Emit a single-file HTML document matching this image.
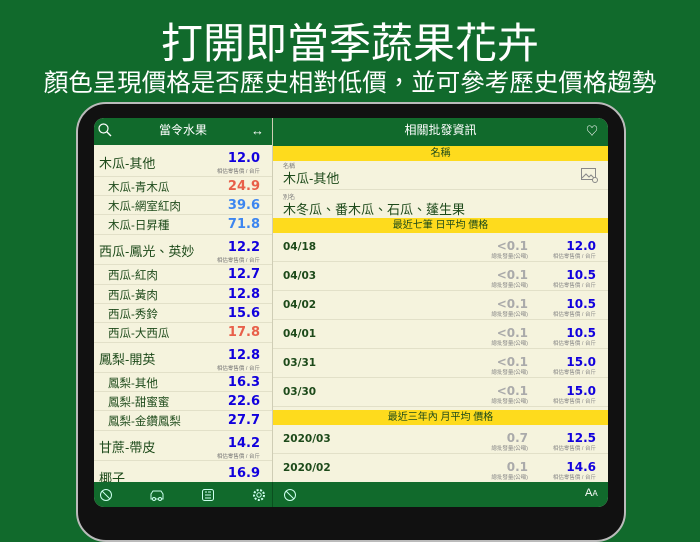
<!DOCTYPE html><html><head><meta charset="utf-8"><style>
*{margin:0;padding:0;box-sizing:border-box}
body{width:700px;height:525px;overflow:hidden;background:#116a2c;font-family:"Liberation Sans","Noto Sans CJK TC",sans-serif;position:relative}
.a{position:absolute}
.t1{left:0;width:700px;top:20px;text-align:center;color:#fff;font-size:42px;line-height:48px;font-weight:normal}
.t2{left:0;width:700px;top:69px;text-align:center;color:#fff;font-size:24.5px;line-height:30px}
.pad{left:76px;top:102px;width:550px;height:440px;background:#111;border-radius:30px;border:2px solid #bbb}
.scr{left:94px;top:118px;width:514px;height:389px;background:#f5f3dd;border-radius:10px;overflow:hidden}
.hd{background:#116a2c;color:#fff;font-size:12px;text-align:center}
.row{position:absolute;left:0;width:178px;border-bottom:1px solid #e2e0c8;color:#1d4a1a}
.n{position:absolute;left:5px;font-size:13px}
.s .n{left:14px;font-size:11.5px}
.v{position:absolute;right:12px;font-weight:bold;font-size:13px;font-family:"DejaVu Sans",sans-serif}
.u{position:absolute;right:12px;font-size:5.5px;color:#777}
.y{position:absolute;left:179px;width:335px;background:#fedb1d;color:#1d4a1a;font-size:10px;text-align:center;line-height:15px}
.r{position:absolute;left:179px;width:335px;height:29px;border-bottom:1px solid #e2e0c8}
.d{position:absolute;left:10px;top:8px;font-weight:bold;font-size:10.5px;color:#1d4a1a;font-family:"DejaVu Sans",sans-serif}
.g{position:absolute;left:190px;width:65px;text-align:right;top:6px;font-size:12px;font-weight:bold;color:#aaa;font-family:"DejaVu Sans",sans-serif}
.gl{position:absolute;left:175px;width:80px;text-align:right;top:19px;font-size:5.5px;color:#888}
.p{position:absolute;right:12px;top:6px;font-size:12px;font-weight:bold;color:#10d;font-family:"DejaVu Sans",sans-serif}
.pl{position:absolute;right:12px;top:19px;font-size:5.5px;color:#888}
svg{position:absolute}
</style></head><body>
<div class="a t1">打開即當季蔬果花卉</div>
<div class="a t2">顏色呈現價格是否歷史相對低價，並可參考歷史價格趨勢</div>
<div class="a pad"></div>
<div class="a scr">
<div class="a hd" style="left:0;top:0;width:178px;height:27px;line-height:25px">當令水果</div>
<svg style="left:4px;top:5px" width="14" height="14" viewBox="0 0 14 14"><circle cx="5.5" cy="5.5" r="4.5" fill="none" stroke="#fff" stroke-width="1.2"/><path d="M9 9l4 4" stroke="#fff" stroke-width="1.3"/></svg>
<div class="a" style="left:157px;top:5px;color:#fff;font-size:13px">↔</div>
<div class="a hd" style="left:179px;top:0;width:335px;height:28px;line-height:25px">相關批發資訊</div>
<div class="a" style="left:492px;top:4px;color:#fff;font-size:12px">♡</div>
<div class="a" style="left:178px;top:0;width:1px;height:389px;background:#cfcdb5"></div>

<div class="row" style="top:28px;height:31px"><span class="n" style="top:7px">木瓜-其他</span><span class="v" style="top:5px;color:#10d">12.0</span><span class="u" style="top:21px">相估零售價 / 台斤</span></div>
<div class="row s" style="top:59px;height:19px"><span class="n" style="top:2px">木瓜-青木瓜</span><span class="v" style="top:2px;color:#e8604a">24.9</span></div>
<div class="row s" style="top:78px;height:19px"><span class="n" style="top:2px">木瓜-網室紅肉</span><span class="v" style="top:2px;color:#3d86f0">39.6</span></div>
<div class="row s" style="top:97px;height:20px"><span class="n" style="top:2px">木瓜-日昇種</span><span class="v" style="top:2px;color:#3d86f0">71.8</span></div>
<div class="row" style="top:117px;height:30px"><span class="n" style="top:6px">西瓜-鳳光、英妙</span><span class="v" style="top:5px;color:#10d">12.2</span><span class="u" style="top:21px">相估零售價 / 台斤</span></div>
<div class="row s" style="top:147px;height:20px"><span class="n" style="top:2px">西瓜-紅肉</span><span class="v" style="top:2px;color:#10d">12.7</span></div>
<div class="row s" style="top:167px;height:19px"><span class="n" style="top:2px">西瓜-黃肉</span><span class="v" style="top:2px;color:#10d">12.8</span></div>
<div class="row s" style="top:186px;height:19px"><span class="n" style="top:2px">西瓜-秀鈴</span><span class="v" style="top:2px;color:#10d">15.6</span></div>
<div class="row s" style="top:205px;height:20px"><span class="n" style="top:2px">西瓜-大西瓜</span><span class="v" style="top:2px;color:#e8604a">17.8</span></div>
<div class="row" style="top:225px;height:30px"><span class="n" style="top:6px">鳳梨-開英</span><span class="v" style="top:5px;color:#10d">12.8</span><span class="u" style="top:21px">相估零售價 / 台斤</span></div>
<div class="row s" style="top:255px;height:19px"><span class="n" style="top:2px">鳳梨-其他</span><span class="v" style="top:2px;color:#10d">16.3</span></div>
<div class="row s" style="top:274px;height:19px"><span class="n" style="top:2px">鳳梨-甜蜜蜜</span><span class="v" style="top:2px;color:#10d">22.6</span></div>
<div class="row s" style="top:293px;height:20px"><span class="n" style="top:2px">鳳梨-金鑽鳳梨</span><span class="v" style="top:2px;color:#10d">27.7</span></div>
<div class="row" style="top:313px;height:30px"><span class="n" style="top:6px">甘蔗-帶皮</span><span class="v" style="top:5px;color:#10d">14.2</span><span class="u" style="top:21px">相估零售價 / 台斤</span></div>
<div class="row" style="top:343px;height:30px;border:0"><span class="n" style="top:7px">椰子</span><span class="v" style="top:5px;color:#10d">16.9</span></div>

<div class="y" style="top:28px">名稱</div>
<div class="a" style="left:189px;top:43px;font-size:6px;color:#777">名稱</div>
<div class="a" style="left:189px;top:50px;font-size:13px;color:#1d4a1a">木瓜-其他</div>
<svg style="left:487px;top:50px" width="18" height="16" viewBox="0 0 18 16"><rect x="0.5" y="0.5" width="14" height="11" fill="none" stroke="#888"/><path d="M1 10l4-4 3 3 2-2 4 4" fill="none" stroke="#888"/><circle cx="14" cy="12" r="2.5" fill="#f5f3dd" stroke="#888"/></svg>
<div class="a" style="left:185px;top:71px;width:329px;height:1px;background:#e2e0c8"></div>
<div class="a" style="left:189px;top:74px;font-size:6px;color:#777">別名</div>
<div class="a" style="left:189px;top:81px;font-size:13px;color:#1d4a1a">木冬瓜、番木瓜、石瓜、蓬生果</div>
<div class="y" style="top:100px">最近七筆 日平均 價格</div>

<div class="r" style="top:115px"><span class="d">04/18</span><span class="g">&lt;0.1</span><span class="gl">總批發量(公噸)</span><span class="p">12.0</span><span class="pl">相估零售價 / 台斤</span></div>
<div class="r" style="top:144px"><span class="d">04/03</span><span class="g">&lt;0.1</span><span class="gl">總批發量(公噸)</span><span class="p">10.5</span><span class="pl">相估零售價 / 台斤</span></div>
<div class="r" style="top:173px"><span class="d">04/02</span><span class="g">&lt;0.1</span><span class="gl">總批發量(公噸)</span><span class="p">10.5</span><span class="pl">相估零售價 / 台斤</span></div>
<div class="r" style="top:202px"><span class="d">04/01</span><span class="g">&lt;0.1</span><span class="gl">總批發量(公噸)</span><span class="p">10.5</span><span class="pl">相估零售價 / 台斤</span></div>
<div class="r" style="top:231px"><span class="d">03/31</span><span class="g">&lt;0.1</span><span class="gl">總批發量(公噸)</span><span class="p">15.0</span><span class="pl">相估零售價 / 台斤</span></div>
<div class="r" style="top:260px"><span class="d">03/30</span><span class="g">&lt;0.1</span><span class="gl">總批發量(公噸)</span><span class="p">15.0</span><span class="pl">相估零售價 / 台斤</span></div>
<div class="y" style="top:292px">最近三年內 月平均 價格</div>
<div class="r" style="top:307px"><span class="d">2020/03</span><span class="g">0.7</span><span class="gl">總批發量(公噸)</span><span class="p">12.5</span><span class="pl">相估零售價 / 台斤</span></div>
<div class="r" style="top:336px;border:0"><span class="d">2020/02</span><span class="g">0.1</span><span class="gl">總批發量(公噸)</span><span class="p">14.6</span><span class="pl">相估零售價 / 台斤</span></div>

<div class="a" style="left:0;top:364px;width:514px;height:25px;background:#116a2c"></div>
<div class="a" style="left:178px;top:364px;width:1px;height:25px;background:#0a4f1f"></div>
<svg style="left:5px;top:370px" width="14" height="14" viewBox="0 0 14 14"><circle cx="7" cy="7" r="5.5" fill="none" stroke="#cfe" stroke-width="1"/><path d="M3 3l8 8" stroke="#cfe"/></svg>
<svg style="left:56px;top:370px" width="14" height="14" viewBox="0 0 14 14"><path d="M1 11V6l2-3h8l2 3v5z" fill="none" stroke="#cfe"/><circle cx="4" cy="11" r="1.5" fill="#116a2c" stroke="#cfe"/><circle cx="10" cy="11" r="1.5" fill="#116a2c" stroke="#cfe"/></svg>
<svg style="left:107px;top:370px" width="14" height="14" viewBox="0 0 14 14"><rect x="1.5" y="1.5" width="11" height="11" rx="2" fill="none" stroke="#cfe"/><path d="M4 4h2M4 7h6M4 10h6M7 4h3" stroke="#cfe"/></svg>
<svg style="left:158px;top:370px" width="14" height="14" viewBox="0 0 14 14"><circle cx="7" cy="7" r="2.2" fill="none" stroke="#cfe"/><circle cx="7" cy="7" r="5" fill="none" stroke="#cfe" stroke-dasharray="2 1.5" stroke-width="2"/></svg>
<svg style="left:189px;top:370px" width="14" height="14" viewBox="0 0 14 14"><circle cx="7" cy="7" r="5.5" fill="none" stroke="#cfe" stroke-width="1"/><path d="M3 3l8 8" stroke="#cfe"/></svg>
<div class="a" style="left:491px;top:369px;color:#fff;font-size:11px">A<span style="font-size:8px">A</span></div>
</div>
</body></html>
